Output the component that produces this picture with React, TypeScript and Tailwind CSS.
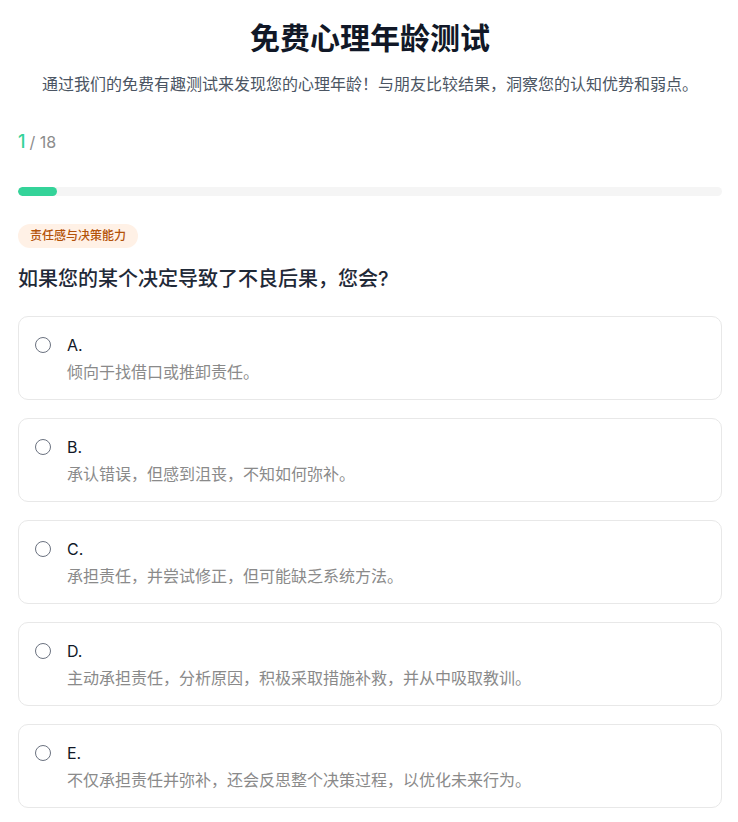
import React from "react";

const options = [
  { k: "A.", t: "倾向于找借口或推卸责任。" },
  { k: "B.", t: "承认错误，但感到沮丧，不知如何弥补。" },
  { k: "C.", t: "承担责任，并尝试修正，但可能缺乏系统方法。" },
  { k: "D.", t: "主动承担责任，分析原因，积极采取措施补救，并从中吸取教训。" },
  { k: "E.", t: "不仅承担责任并弥补，还会反思整个决策过程，以优化未来行为。" },
];

export default function App() {
  return (
    <div
      className="bg-white min-h-screen pl-[18px] pr-[16px] pt-[16px] pb-4 text-[#1f2937]"
      style={{ fontFamily: "Inter, 'Noto Sans CJK SC', sans-serif" }}
    >
      <h1 className="text-center text-[30px] leading-[44px] font-bold text-[#111827]">免费心理年龄测试</h1>
      <p className="text-center text-[16px] leading-[24px] text-[#4b5563] mt-[12px]">
        通过我们的免费有趣测试来发现您的心理年龄！与朋友比较结果，洞察您的认知优势和弱点。
      </p>
      <div className="mt-[32px] flex items-baseline gap-[4px] h-[24px]">
        <span className="text-[18px] font-medium text-[#34d399]">1</span>
        <span className="text-[16px] text-[#8c8c8c]">/ 18</span>
      </div>
      <div className="mt-[35px] h-[9px] rounded-full bg-[#f5f5f5] overflow-hidden">
        <div className="h-full w-[39px] rounded-full bg-[#34d399]" />
      </div>
      <div className="mt-[26px]">
        <span className="inline-flex items-center h-[24px] px-[12px] rounded-full bg-[#fff1e6] text-[#b45309] text-[12px] font-medium">
          责任感与决策能力
        </span>
      </div>
      <h2 className="mt-[17px] text-[20px] leading-[28px] font-medium text-[#1f2937]">如果您的某个决定导致了不良后果，您会?</h2>
      <div className="mt-[23px] flex flex-col gap-[18px]">
        {options.map((o) => (
          <div key={o.k} className="border border-[#e8e8e8] rounded-[10px] px-4 pt-4 pb-[16px] flex gap-4">
            <div className="h-[24px] flex items-center">
              <div className="w-[16px] h-[16px] rounded-full border-[1.5px] border-[#6b7280]" />
            </div>
            <div>
              <div className="text-[16px] leading-[24px] text-[#111827]">{o.k}</div>
              <div className="mt-1 text-[16px] leading-[22px] text-[#8a8a8a]">{o.t}</div>
            </div>
          </div>
        ))}
      </div>
    </div>
  );
}
